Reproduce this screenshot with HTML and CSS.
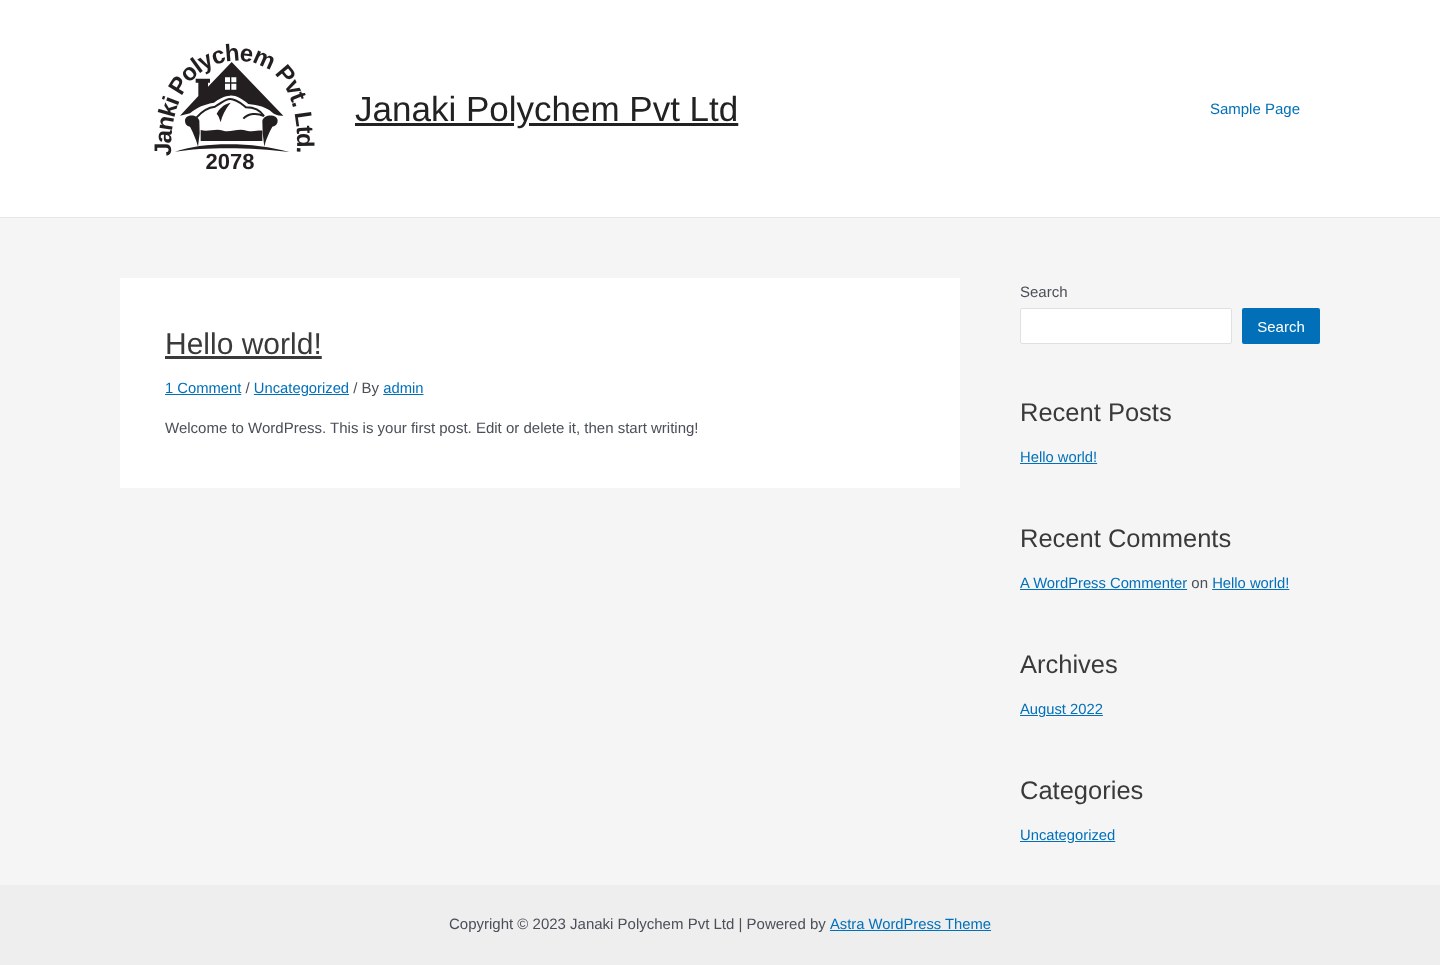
FILE: index.html
```html
<!DOCTYPE html>
<html lang="en">
<head>
<meta charset="utf-8">
<title>Janaki Polychem Pvt Ltd</title>
<link rel="stylesheet" href="styles.css">
</head>
<body>
<header class="site-header">
  <div class="header-inner">
    <div class="branding">
      <svg class="logo" viewBox="0 0 585 471" role="img" aria-label="Janki Polychem Pvt. Ltd. 2078">
        <defs>
          <path id="arc" d="M93 378 C90 280 112 190 172 136 C240 78 340 78 402 132 C458 184 480 270 468 400"/>
        </defs>
        <text class="logo-arc"><textPath href="#arc" startOffset="0">Janki Polychem Pvt. Ltd.</textPath></text>
        <path class="ink" d="M275 96 L430 257 C415 258 405 255 395 246 C380 232 355 225 325 222 C305 205 285 195 270 197 C250 198 235 208 222 218 C195 222 170 232 150 250 L120 257 L175 198 V158 H167 V146 H210 V158 H204 V170 Z"/>
        <path class="paper" d="M255 142h15v15h-15zM274 142h15v15h-15zM255 161h15v18h-15zM274 161h15v18h-15z"/>
        <path class="curve" d="M170 262 C185 245 205 232 225 230 C240 222 255 207 270 207 C290 207 305 222 318 232 C340 232 360 240 372 258"/>
        <path class="curve" d="M310 266 C325 250 350 248 372 258"/>
        <path class="ink" d="M272 218 C250 222 235 240 230 252 C235 255 238 265 242 277 C246 258 255 238 272 218 Z"/>
        <path class="ink" d="M135 272 C135 252 172 250 178 272 L179 310 L174 350 C168 325 155 300 150 290 C140 288 135 282 135 272 Z"/>
        <path class="ink" d="M413 272 C413 252 372 250 367 272 L368 310 L373 350 C378 325 392 300 397 290 C407 288 413 282 413 272 Z"/>
        <path class="ink" d="M182 300 C205 307 225 294 250 302 C270 308 295 294 320 302 C340 307 355 300 367 302 L367 333 L182 333 Z"/>
        <path class="ink" d="M105 365 C190 335 340 335 448 366 C340 352 200 350 105 365 Z"/>
        <text class="logo-year" x="270" y="418" text-anchor="middle">2078</text>
      </svg>
      <a class="site-title" href="#">Janaki Polychem Pvt Ltd</a>
    </div>
    <nav class="main-nav"><a href="#">Sample Page</a></nav>
  </div>
</header>
<div class="site-content">
  <main class="primary">
    <article class="post">
      <h2 class="post-title"><a href="#">Hello world!</a></h2>
      <p class="post-meta"><a href="#">1 Comment</a> / <a href="#">Uncategorized</a> / By <a href="#">admin</a></p>
      <p class="post-body">Welcome to WordPress. This is your first post. Edit or delete it, then start writing!</p>
    </article>
  </main>
  <aside class="sidebar">
    <form class="search-widget">
      <label class="search-label" for="s">Search</label>
      <div class="search-row">
        <input class="search-input" id="s" type="text">
        <button class="search-button" type="button">Search</button>
      </div>
    </form>
    <section class="widget">
      <h2 class="widget-title">Recent Posts</h2>
      <p class="widget-line"><a href="#">Hello world!</a></p>
    </section>
    <section class="widget">
      <h2 class="widget-title">Recent Comments</h2>
      <p class="widget-line"><a href="#">A WordPress Commenter</a> on <a href="#">Hello world!</a></p>
    </section>
    <section class="widget">
      <h2 class="widget-title">Archives</h2>
      <p class="widget-line"><a href="#">August 2022</a></p>
    </section>
    <section class="widget">
      <h2 class="widget-title">Categories</h2>
      <p class="widget-line"><a href="#">Uncategorized</a></p>
    </section>
  </aside>
</div>
<footer class="site-footer">
  <p>Copyright © 2023 Janaki Polychem Pvt Ltd | Powered by <a href="#">Astra WordPress Theme</a></p>
</footer>
</body>
</html>
```
FILE: styles.css
```css
* { box-sizing: border-box; }
html, body { margin: 0; padding: 0; }
body {
  background: #f5f5f5;
  color: #4b4f58;
  font-family: "Liberation Sans", Arial, sans-serif;
  font-size: 15px;
  line-height: 24px;
  display: flex;
  flex-direction: column;
  min-height: 965px;
  text-rendering: geometricPrecision;
  will-change: transform;
}
a { color: #0170b9; font-size: 14.78px; }
p, h2 { margin: 0; font-weight: 400; }

.site-header {
  background: #fff;
  border-bottom: 1px solid #e6e6e6;
  height: 218px;
}
.header-inner {
  width: 1200px;
  margin: 0 auto;
  padding: 30px 20px;
  display: flex;
  justify-content: space-between;
  align-items: center;
  height: 216px;
}
.branding { display: flex; align-items: center; gap: 20px; }
.logo { width: 195px; height: 157px; display: block; }
.logo-arc { font: 700 72px "Liberation Sans", Arial, sans-serif; letter-spacing: -3.5px; fill: #231f20; }
.logo-year { font: 700 66px "Liberation Sans", Arial, sans-serif; fill: #231f20; }
.ink { fill: #231f20; }
.paper { fill: #fff; }
.curve { fill: none; stroke: #231f20; stroke-width: 6; }
.site-title { font-size: 35px; line-height: 46px; color: #222; margin-top: 4px; }
.main-nav { margin-top: 4px; }
.main-nav a { color: #0170b9; text-decoration: none; font-size: 15px; }

.site-content {
  width: 1200px;
  margin: 0 auto;
  padding-top: 60px;
  display: flex;
  justify-content: space-between;
  flex: 1;
}
.primary { width: 840px; }
.post { background: #fff; height: 210px; padding: 47px 45px 0; }
.post-title { font-size: 30px; line-height: 40px; }
.post-title a { color: #3a3a3a; font-size: 30px; }
.post-meta { margin-top: 12px; }
.post-body { margin-top: 16px; }

.sidebar { width: 300px; }
.search-label { display: block; line-height: 28px; padding-top: 1px; margin-bottom: 1px; }
.search-row { display: flex; gap: 10px; }
.search-input {
  flex: 1;
  min-width: 0;
  height: 36px;
  background: #fff;
  border: 1px solid #e0e0e0;
  border-radius: 2px;
}
.search-button {
  width: 78px;
  height: 36px;
  background: #0170b9;
  color: #fff;
  border: 0;
  border-radius: 2px;
  font: 15px "Liberation Sans", Arial, sans-serif;
}
.search-widget { padding-bottom: 2.3px; }
.widget { margin-top: 49.5px; }
.widget-title { font-size: 25.5px; line-height: 34px; color: #3a3a3a; }
.widget-line { margin-top: 14.5px; line-height: 27px; }

.site-footer {
  background: #eee;
  height: 80px;
  padding-top: 28px;
  text-align: center;
}
```
